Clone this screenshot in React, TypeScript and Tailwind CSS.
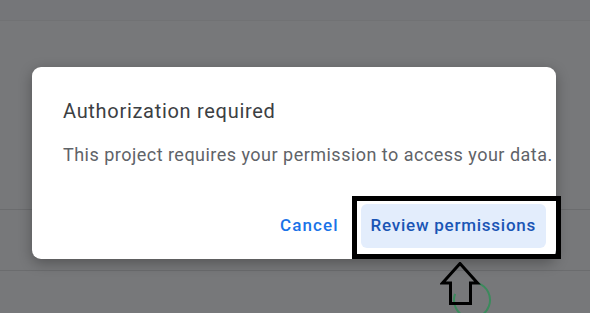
export default function App() {
  return (
    <div className="relative h-[313px] w-[590px] overflow-hidden bg-[#77787a] font-['Roboto',sans-serif]">
      {/* page behind the scrim */}
      <div className="h-[21px] border-b border-[#717274] bg-[#757679]" />
      <div className="h-[189px] border-b border-[#6b6c6e]" />
      <div className="h-[61px] border-b border-[#6b6c6e]" />

      {/* spinner peeking out from under the dialog */}
      <svg className="absolute left-[440px] top-[262px]" width="60" height="51" viewBox="440 262 60 51">
        <path d="M478.2 283.1 A18 18 0 1 1 455.1 293.8" fill="none" stroke="#3b8a5c" strokeWidth="2" />
        <path
          d="M460 263.5 L442.5 283 L450.5 283 L450.5 303.5 L470.5 303.5 L470.5 283 L477.5 283 Z"
          fill="none"
          stroke="#000"
          strokeWidth="3"
          strokeLinejoin="miter"
        />
      </svg>

      {/* dialog */}
      <div className="absolute left-[32px] top-[67px] flex h-[192px] w-[524px] flex-col rounded-[9px] bg-white pt-[30px] shadow-[0_4px_14px_rgba(0,0,0,0.3)]">
        <h2 className="px-[31px] text-[20px] leading-[28px] font-normal tracking-[0.7px] text-[#3c4043]">
          Authorization required
        </h2>
        <p className="mt-[18px] pl-[31px] whitespace-nowrap text-[18px] leading-[24px] tracking-[0.48px] text-[#5f6368]">
          This project requires your permission to access your data.
        </p>
        <div className="mt-auto flex items-center justify-end gap-[12px] pb-[11px] pr-[10px]">
          <button className="h-[44px] px-[10px] text-[17px] font-medium tracking-[1.1px] text-[#1a73e8]">Cancel</button>
          <button className="h-[44px] rounded-[6px] bg-[#e3edfc] px-[10px] text-[17px] font-medium tracking-[0.75px] text-[#1a55b5]">
            Review permissions
          </button>
        </div>
      </div>

      {/* highlight box */}
      <div className="absolute left-[352px] top-[196px] h-[63px] w-[209px] border-[5px] border-black" />
    </div>
  );
}
